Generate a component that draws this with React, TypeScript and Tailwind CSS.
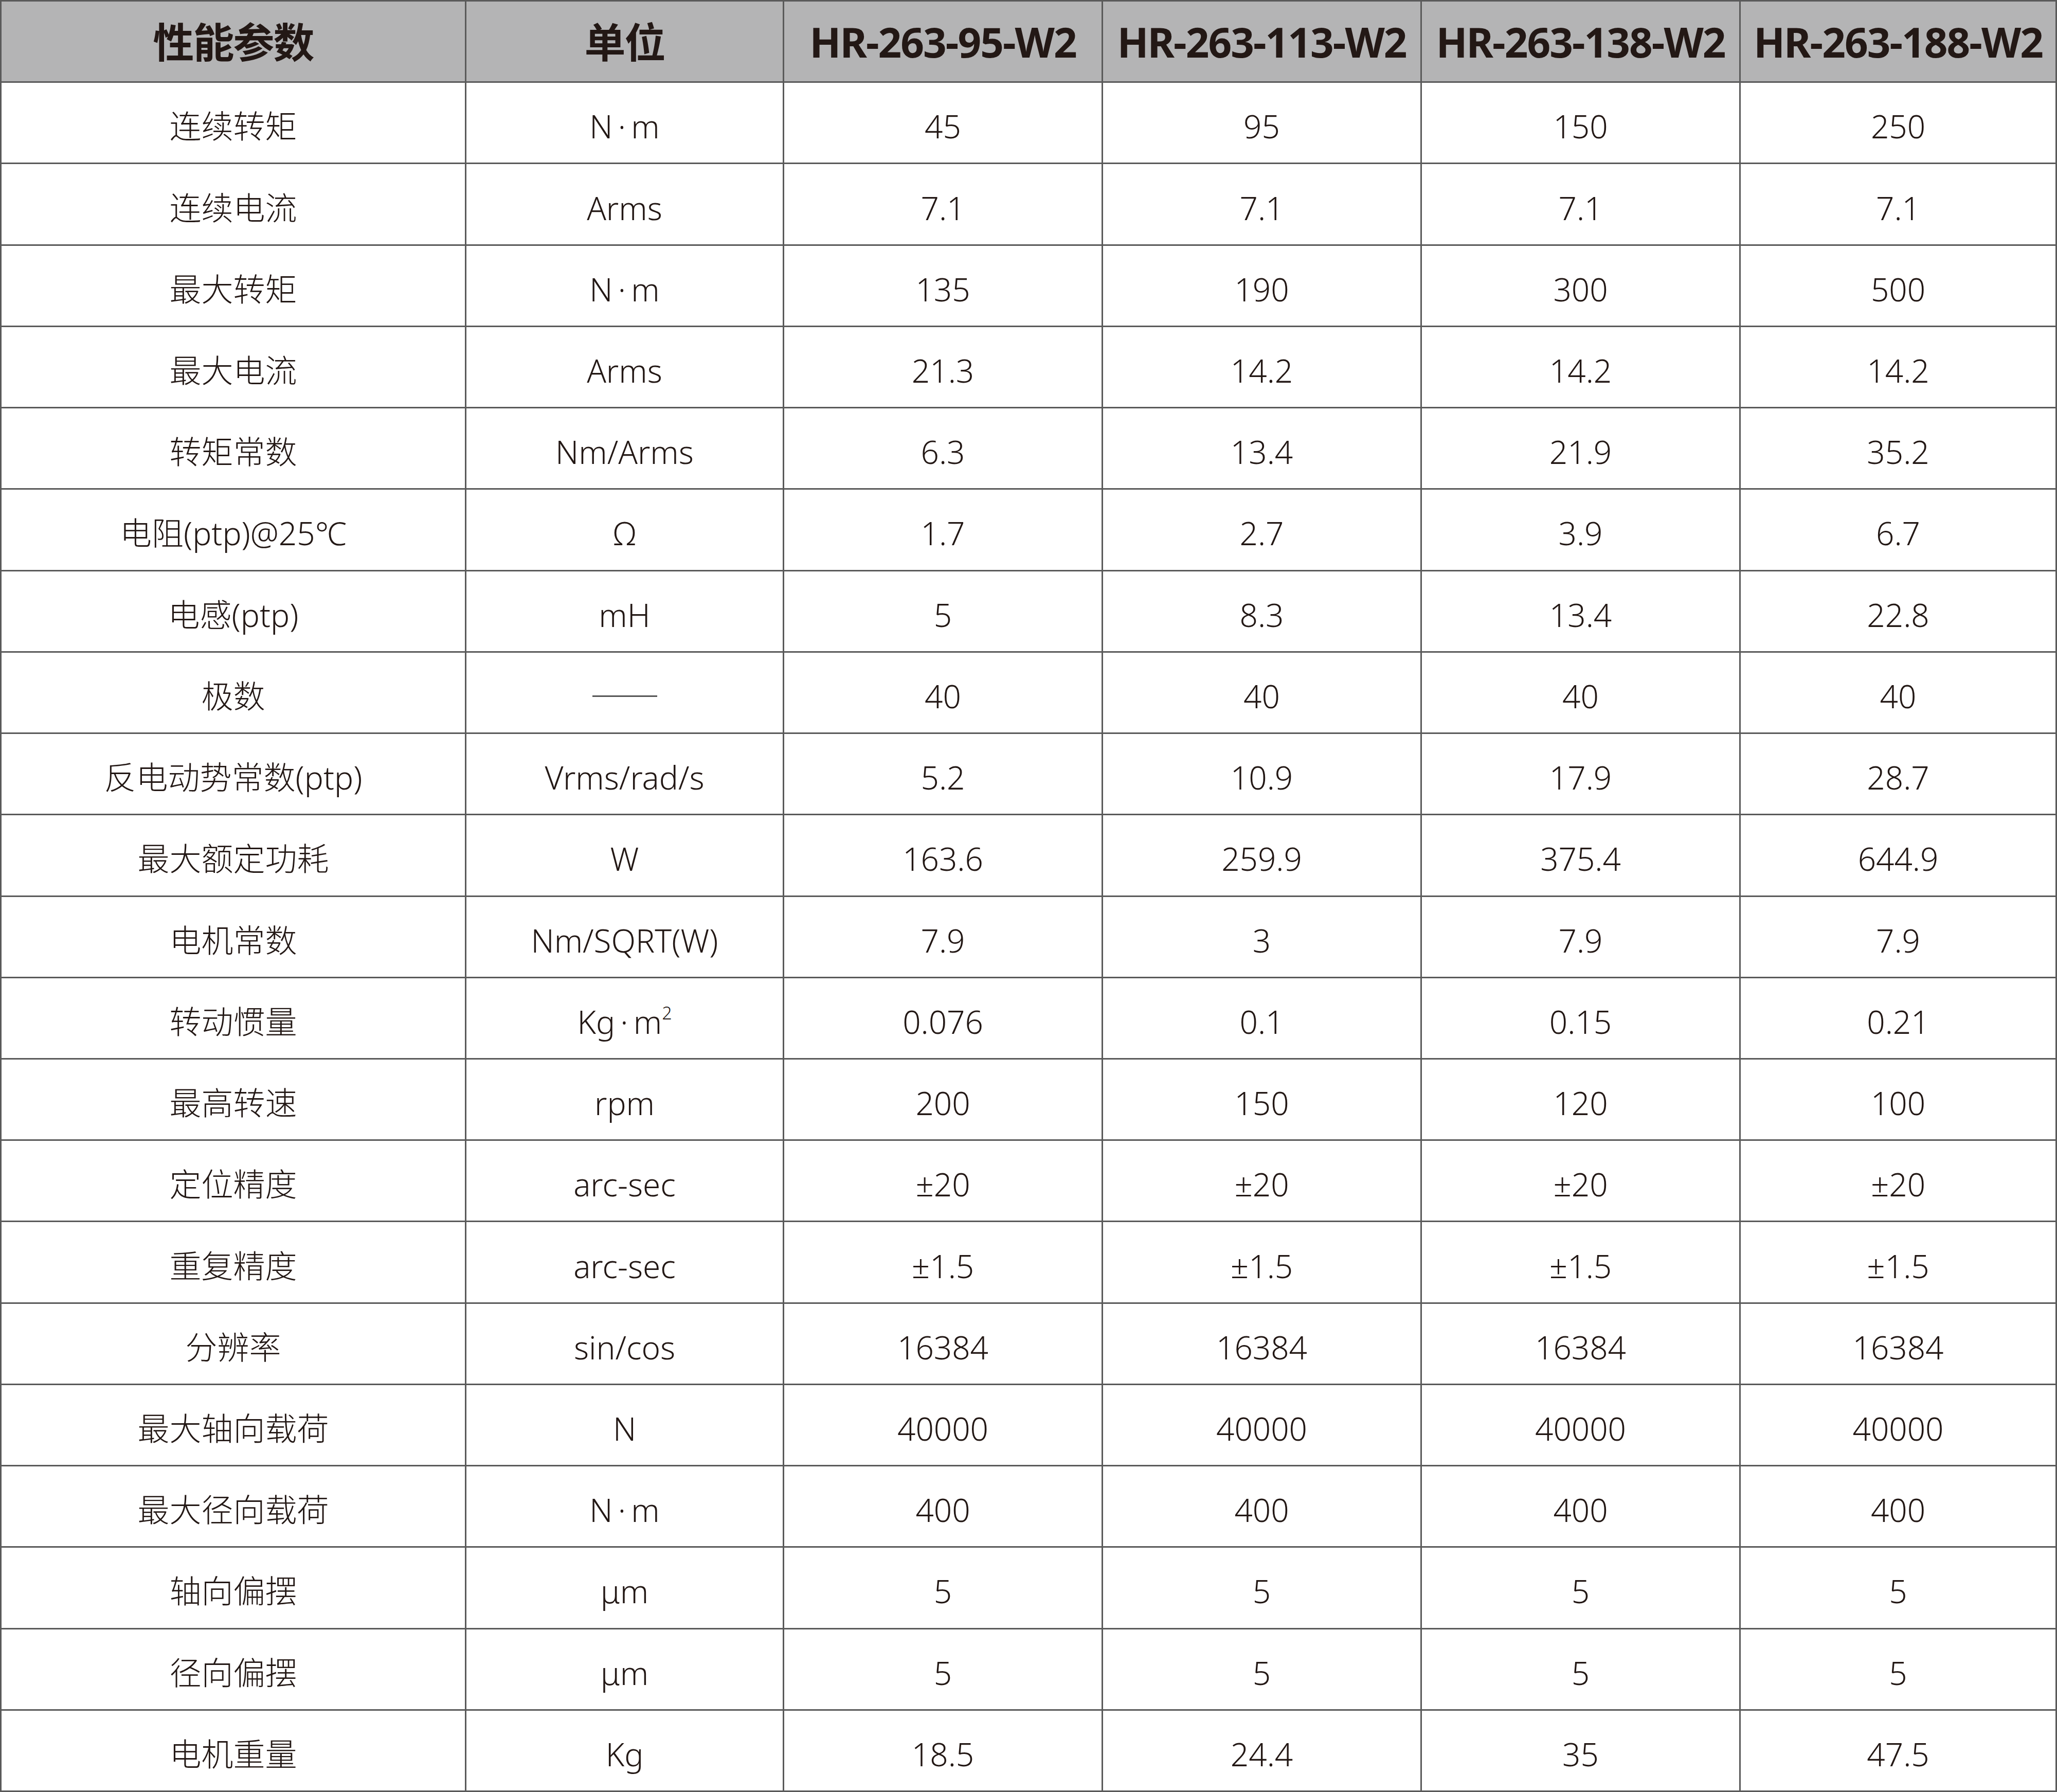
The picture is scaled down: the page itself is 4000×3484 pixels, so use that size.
import React from "react";

const headers = ["性能参数", "单位", "HR-263-95-W2", "HR-263-113-W2", "HR-263-138-W2", "HR-263-188-W2"];

type Row = [string, React.ReactNode, string, string, string, string];

const dash = <span className="inline-block h-[3px] w-[126px] bg-[#555]" />;
const nm = "N\u2009·\u2009m";

const rows: Row[] = [
  ["连续转矩", nm, "45", "95", "150", "250"],
  ["连续电流", "Arms", "7.1", "7.1", "7.1", "7.1"],
  ["最大转矩", nm, "135", "190", "300", "500"],
  ["最大电流", "Arms", "21.3", "14.2", "14.2", "14.2"],
  ["转矩常数", "Nm/Arms", "6.3", "13.4", "21.9", "35.2"],
  ["电阻(ptp)@25℃", "Ω", "1.7", "2.7", "3.9", "6.7"],
  ["电感(ptp)", "mH", "5", "8.3", "13.4", "22.8"],
  ["极数", dash, "40", "40", "40", "40"],
  ["反电动势常数(ptp)", "Vrms/rad/s", "5.2", "10.9", "17.9", "28.7"],
  ["最大额定功耗", "W", "163.6", "259.9", "375.4", "644.9"],
  ["电机常数", "Nm/SQRT(W)", "7.9", "3", "7.9", "7.9"],
  [
    "转动惯量",
    <>
      Kg{"\u2009·\u2009"}m<sup className="text-[34px]">2</sup>
    </>,
    "0.076",
    "0.1",
    "0.15",
    "0.21",
  ],
  ["最高转速", "rpm", "200", "150", "120", "100"],
  ["定位精度", "arc-sec", "±20", "±20", "±20", "±20"],
  ["重复精度", "arc-sec", "±1.5", "±1.5", "±1.5", "±1.5"],
  ["分辨率", "sin/cos", "16384", "16384", "16384", "16384"],
  ["最大轴向载荷", "N", "40000", "40000", "40000", "40000"],
  ["最大径向载荷", nm, "400", "400", "400", "400"],
  ["轴向偏摆", "μm", "5", "5", "5", "5"],
  ["径向偏摆", "μm", "5", "5", "5", "5"],
  ["电机重量", "Kg", "18.5", "24.4", "35", "47.5"],
];

export default function App() {
  return (
    <div
      className="grid h-[3484px] w-[4000px] grid-cols-[904px_618px_620px_620px_620px_1fr] grid-rows-[repeat(22,minmax(0,1fr))] border-l-[3px] border-t-[3px] border-[#5a5a5a] bg-white text-[#231815]"
      style={{ fontFamily: '"Noto Sans", "Noto Sans CJK SC", sans-serif' }}
    >
      {headers.map((h) => (
        <div
          key={h}
          className="flex items-center justify-center border-b-[3px] border-r-[3px] border-[#5a5a5a] bg-[#b4b4b5] text-[80px] font-bold tracking-[-2px] whitespace-nowrap"
        >
          {h}
        </div>
      ))}
      {rows.map((row, i) =>
        row.map((cell, j) => (
          <div
            key={`${i}-${j}`}
            className="flex items-center justify-center border-b-[3px] border-r-[3px] border-[#5a5a5a] pt-[14px] text-[62px] font-light whitespace-nowrap"
          >
            {cell}
          </div>
        ))
      )}
    </div>
  );
}
